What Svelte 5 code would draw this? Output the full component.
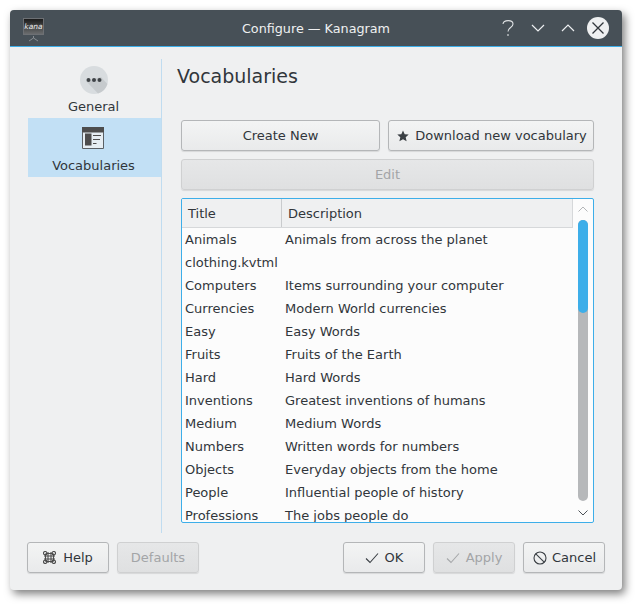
<script>
  const vocabularies = [
    ['Animals', 'Animals from across the planet'],
    ['clothing.kvtml', ''],
    ['Computers', 'Items surrounding your computer'],
    ['Currencies', 'Modern World currencies'],
    ['Easy', 'Easy Words'],
    ['Fruits', 'Fruits of the Earth'],
    ['Hard', 'Hard Words'],
    ['Inventions', 'Greatest inventions of humans'],
    ['Medium', 'Medium Words'],
    ['Numbers', 'Written words for numbers'],
    ['Objects', 'Everyday objects from the home'],
    ['People', 'Influential people of history'],
    ['Professions', 'The jobs people do']
  ];
</script>

<div class="page">
<div class="window">
  <header class="titlebar">
    <svg class="appicon" width="22" height="24" viewBox="0 0 22 24">
      <defs>
        <linearGradient id="screen" x1="0" y1="0" x2="0" y2="1">
          <stop offset="0" stop-color="#1c1c1c"/>
          <stop offset="1" stop-color="#6a6c6e"/>
        </linearGradient>
      </defs>
      <rect x="0" y="0" width="21" height="17" fill="#6d7074"/>
      <rect x="1" y="1" width="19" height="15" fill="url(#screen)"/>
      <text x="10.500" y="11" text-anchor="middle" font-size="7.500" font-style="italic" fill="#eeeeee">kana</text>
      <path d="M10.500 18 L10.500 20 M6 23 L10.500 20 L15 23" stroke="#8a8f94" fill="none"/>
    </svg>
    <span class="wintitle">Configure — Kanagram</span>
    <div class="winbtns">
      <svg width="16" height="20" viewBox="0 0 16 20"><path d="M4 6 C4.500 1.500 14 1.500 14 6 C14 9.500 9 9.500 9 13.500 M9 16 L9 18" stroke="#dfe2e4" stroke-width="1.100" fill="none"/></svg>
      <svg width="14" height="8" viewBox="0 0 14 8"><path d="M1 1 L7 7 L13 1" stroke="#eceef0" stroke-width="1.200" fill="none"/></svg>
      <svg width="14" height="8" viewBox="0 0 14 8"><path d="M1 7 L7 1 L13 7" stroke="#eceef0" stroke-width="1.200" fill="none"/></svg>
      <svg class="close" width="22" height="22" viewBox="0 0 22 22"><circle cx="11" cy="11" r="11" fill="#eff0f1"/><path d="M5.500 5.500 L16.500 16.500 M16.500 5.500 L5.500 16.500" stroke="#31363b" stroke-width="1.300"/></svg>
    </div>
  </header>

  <div class="body">
    <div class="main">
      <nav class="sidebar">
        <div class="navitem">
          <svg width="28" height="28" viewBox="0 0 28 28">
            <circle cx="14" cy="14" r="14" fill="#d8dcdf"/>
            <path d="M6 15 L18 27.400 A14 14 0 0 0 27.400 18 L21 11 Z" fill="#c6cacd"/>
            <circle cx="8.500" cy="14" r="2" fill="#3f4347"/><circle cx="14" cy="14" r="2" fill="#3f4347"/><circle cx="19.500" cy="14" r="2" fill="#3f4347"/>
          </svg>
          <span>General</span>
        </div>
        <div class="navitem active">
          <svg class="vocabicon" width="22" height="22" viewBox="0 0 22 22">
            <rect x="0" y="0" width="22" height="22" fill="#e6eef3"/>
            <rect x="0" y="0" width="22" height="5.500" fill="#4d4d4d"/>
            <path d="M0.500 5 V21.500 H21.500 V5" stroke="#5a6065" fill="none"/>
            <rect x="3" y="6.500" width="6.500" height="12" fill="#4d4d4d"/>
            <path d="M11 8.500 H19 M11 12.500 H18 M11 16.500 H14.500" stroke="#4d4d4d"/>
          </svg>
          <span>Vocabularies</span>
        </div>
      </nav>

      <section class="content">
        <h1>Vocabularies</h1>
        <div class="panel">
          <div class="toprow">
            <button class="btn create">Create New</button>
            <button class="btn download">
              <svg width="12" height="12" viewBox="0 0 12 12"><path d="M6 0.500 L7.700 4.200 L11.700 4.600 L8.700 7.300 L9.600 11.300 L6 9.200 L2.400 11.300 L3.300 7.300 L0.300 4.600 L4.300 4.200 Z" fill="#3a3f44"/></svg>
              Download new vocabulary
            </button>
          </div>
          <button class="btn edit" disabled>Edit</button>
          <div class="table">
            <div class="list">
              <div class="thead">
                <div class="th title">Title</div>
                <div class="th desc">Description</div>
              </div>
              <div class="rows">
                {#each vocabularies as [title, description]}
                  <div class="row">
                    <span class="title">{title}</span>
                    <span class="desc">{description}</span>
                  </div>
                {/each}
              </div>
            </div>
            <div class="scrollbar">
              <svg width="10" height="6" viewBox="0 0 10 6"><path d="M0.500 5.500 L5 1 L9.500 5.500" stroke="#b4b6b8" fill="none"/></svg>
              <div class="track"><div class="thumb"></div></div>
              <svg class="down" width="10" height="6" viewBox="0 0 10 6"><path d="M0.500 0.500 L5 5 L9.500 0.500" stroke="#4d5257" fill="none"/></svg>
            </div>
          </div>
        </div>
      </section>
    </div>

    <footer class="footer">
      <button class="btn help">
        <svg width="13" height="13" viewBox="0 0 13 13" fill="none" stroke="#4d4d4d" stroke-width="1.100"><rect x="2.500" y="2.500" width="8" height="8" rx="1"/><path d="M5 1 V12 M8 1 V12 M1 5 H12 M1 8 H12"/><circle cx="2.200" cy="2.200" r="1.700"/><circle cx="10.800" cy="2.200" r="1.700"/><circle cx="2.200" cy="10.800" r="1.700"/><circle cx="10.800" cy="10.800" r="1.700"/></svg>
        Help
      </button>
      <button class="btn" disabled>Defaults</button>
      <div class="spacer"></div>
      <button class="btn">
        <svg width="14" height="12" viewBox="0 0 14 12"><path d="M1 6.500 L5 10.500 L13 1.500" stroke="#3a3f44" stroke-width="1.100" fill="none"/></svg>
        OK
      </button>
      <button class="btn" disabled>
        <svg width="14" height="12" viewBox="0 0 14 12"><path d="M1 6.500 L5 10.500 L13 1.500" stroke="#a6a8aa" stroke-width="1.100" fill="none"/></svg>
        Apply
      </button>
      <button class="btn cancel">
        <svg width="14" height="14" viewBox="0 0 14 14" fill="none" stroke="#3a3f44" stroke-width="1.100"><circle cx="7" cy="7" r="6"/><path d="M2.800 2.800 L11.200 11.200"/></svg>
        Cancel
      </button>
    </footer>
  </div>
</div>
</div>

<style>
  :global(body) {
    margin: 0;
    background: #fff;
  }

  .page {
    width: 638px;
    height: 606px;
    box-sizing: border-box;
    padding: 10px 0 0 10px;
    overflow: hidden;
  }

  .window {
    width: 612px;
    height: 580px;
    display: flex;
    flex-direction: column;
    background: #eff0f1;
    border-radius: 4px;
    box-shadow: 3px 4px 8px rgba(0, 0, 0, 0.5);
    overflow: hidden;
    font-family: "DejaVu Sans", sans-serif;
    font-size: 13px;
    color: #31363b;
  }

  .titlebar {
    height: 37px;
    box-sizing: border-box;
    flex: none;
    display: flex;
    align-items: center;
    position: relative;
    background: #475057;
    border-bottom: 1px solid #3daee9;
    padding: 0 13px;
  }
  .appicon { margin-top: 4px; }
  .wintitle {
    position: absolute;
    left: 0;
    right: 0;
    text-align: center;
    font-size: 12.750px;
    color: #eff0f1;
  }
  .winbtns {
    margin-left: auto;
    display: flex;
    align-items: center;
    gap: 16px;
    z-index: 1;
  }
  .close { margin-left: -4px; }

  .body {
    flex: 1;
    display: flex;
    flex-direction: column;
    padding: 12px 17px 17px;
    min-height: 0;
  }
  .main {
    flex: 1;
    display: flex;
    min-height: 0;
  }

  .sidebar {
    width: 133px;
    flex: none;
    padding-left: 1px;
    border-right: 1px solid #c0dcf0;
    box-sizing: content-box;
  }
  .navitem {
    height: 59px;
    box-sizing: border-box;
    display: flex;
    flex-direction: column;
    align-items: center;
    justify-content: flex-end;
    gap: 5px;
    padding: 0 2px 4px 0;
  }
  .navitem.active {
    background: #c2e0f5;
    gap: 9px;
  }
  .vocabicon { margin-right: 2px; }

  .content {
    flex: 1;
    min-width: 0;
    padding-left: 15px;
    display: flex;
    flex-direction: column;
  }
  h1 {
    margin: 0;
    font-size: 19px;
    font-weight: 400;
    line-height: 24px;
    padding-top: 5px;
    height: 24px;
  }
  .panel {
    padding: 32px 11px 10px 4px;
    display: flex;
    flex-direction: column;
    gap: 8px;
    flex: 1;
    min-height: 0;
  }
  .toprow {
    display: flex;
    gap: 8px;
  }

  .btn {
    height: 31px;
    box-sizing: border-box;
    display: flex;
    align-items: center;
    justify-content: center;
    gap: 6px;
    padding: 0;
    font: inherit;
    color: #31363b;
    background: linear-gradient(#f3f4f4, #e9eaeb);
    border: 1px solid #b4b6b8;
    border-radius: 3px;
    box-shadow: 0 1px 1px rgba(0, 0, 0, 0.1);
  }
  .btn:disabled {
    color: #a3a5a7;
    background: linear-gradient(#e6e7e8, #dfe0e1);
    border-color: #cfd0d1;
  }
  .create { width: 199px; }
  .download { width: 206px; padding-left: 2px; }
  .edit { width: 100%; flex: none; }

  .table {
    flex: 1;
    min-height: 0;
    display: flex;
    background: #fcfcfc;
    border: 1px solid #3daee9;
    border-radius: 2px;
    overflow: hidden;
  }
  .list {
    flex: 1;
    min-width: 0;
    display: flex;
    flex-direction: column;
  }
  .thead {
    display: flex;
    height: 29px;
    box-sizing: border-box;
    flex: none;
    background: #eff0f1;
    border-bottom: 1px solid #d6d8da;
    border-right: 1px solid #d6d8da;
  }
  .th {
    display: flex;
    align-items: center;
    padding-left: 6px;
    box-sizing: border-box;
  }
  .th.title {
    width: 100px;
    flex: none;
    border-right: 1px solid #c9cbcd;
  }
  .rows {
    flex: 1;
    min-height: 0;
    overflow: hidden;
  }
  .row {
    display: flex;
    height: 23px;
    align-items: center;
  }
  .row .title {
    width: 100px;
    flex: none;
    padding-left: 3px;
    box-sizing: border-box;
  }
  .row .desc { padding-left: 3px; }

  .scrollbar {
    width: 20px;
    flex: none;
    display: flex;
    flex-direction: column;
    align-items: center;
    padding-top: 7px;
    box-sizing: border-box;
  }
  .track {
    width: 10px;
    height: 281px;
    margin-top: 8px;
    border-radius: 5px;
    background: #b6b8ba;
  }
  .thumb {
    height: 93px;
    border-radius: 5px;
    background: #3daee9;
  }
  .down { margin-top: 9px; }

  .footer {
    display: flex;
    gap: 8px;
    margin-top: 9px;
    flex: none;
  }
  .footer .btn { width: 82px; }
  .footer .help { gap: 7px; }
  .footer .cancel svg { margin-left: 1px; margin-right: -1px; }
  .spacer { flex: 1; }
</style>
